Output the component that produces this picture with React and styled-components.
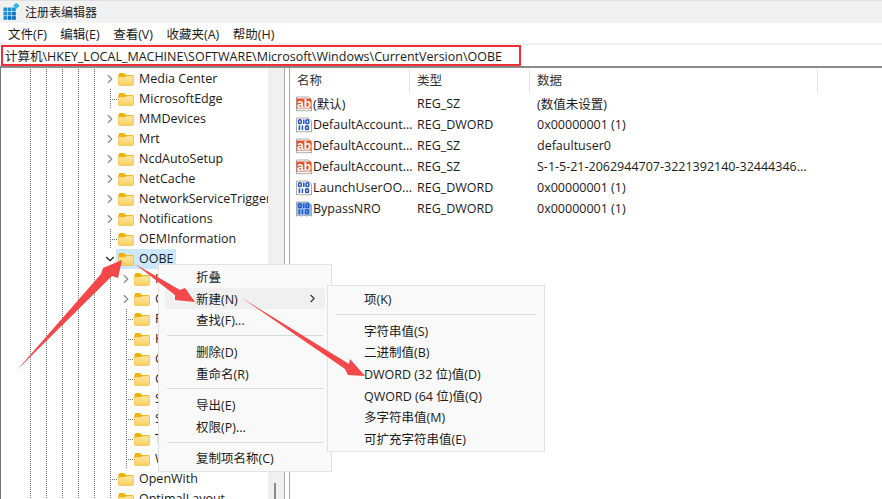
import React from "react";
import styled, { createGlobalStyle } from "styled-components";
import { ChevronRight, ChevronDown } from "lucide-react";

const GlobalStyle = createGlobalStyle`
  html, body {
    margin: 0;
    padding: 0;
    background: #fff;
  }
  body {
    font-family: "Open Sans", "Noto Sans CJK SC", sans-serif;
    font-size: 12.5px;
    color: #1a1a1a;
  }
`;

const treeRows = [
  { name: "Media Center", branch: true },
  { name: "MicrosoftEdge" },
  { name: "MMDevices", branch: true },
  { name: "Mrt", branch: true },
  { name: "NcdAutoSetup", branch: true },
  { name: "NetCache", branch: true },
  { name: "NetworkServiceTriggers", branch: true },
  { name: "Notifications", branch: true },
  { name: "OEMInformation" },
  { name: "OOBE", open: true, selected: true },
  { name: "I", branch: true, child: true },
  { name: "C", branch: true, child: true },
  { name: "F", child: true },
  { name: "H", child: true },
  { name: "C", child: true },
  { name: "C", child: true },
  { name: "S", child: true },
  { name: "S", child: true },
  { name: "T", child: true },
  { name: "W", child: true },
  { name: "OpenWith" },
  { name: "OptimalLayout" },
];

const values = [
  { kind: "sz", name: "(默认)", type: "REG_SZ", data: "(数值未设置)" },
  { kind: "bin", name: "DefaultAccount...", type: "REG_DWORD", data: "0x00000001 (1)" },
  { kind: "sz", name: "DefaultAccount...", type: "REG_SZ", data: "defaultuser0" },
  { kind: "sz", name: "DefaultAccount...", type: "REG_SZ", data: "S-1-5-21-2062944707-3221392140-32444346..." },
  { kind: "bin", name: "LaunchUserOO...", type: "REG_DWORD", data: "0x00000001 (1)" },
  { kind: "bin", name: "BypassNRO", type: "REG_DWORD", data: "0x00000001 (1)", selected: true },
];

const contextItems = [
  { label: "折叠" },
  { label: "新建(N)", active: true },
  { label: "查找(F)..." },
  { sep: true },
  { label: "删除(D)" },
  { label: "重命名(R)" },
  { sep: true },
  { label: "导出(E)" },
  { label: "权限(P)..." },
  { sep: true },
  { label: "复制项名称(C)" },
];

const subItems = [
  { label: "项(K)" },
  { sep: true },
  { label: "字符串值(S)" },
  { label: "二进制值(B)" },
  { label: "DWORD (32 位)值(D)" },
  { label: "QWORD (64 位)值(Q)" },
  { label: "多字符串值(M)" },
  { label: "可扩充字符串值(E)" },
];

const Window = styled.div`
  position: relative;
  width: 882px;
  height: 499px;
  overflow: hidden;
  background: #fff;
  display: flex;
  flex-direction: column;
`;

const TitleBar = styled.div`
  height: 23px;
  box-sizing: border-box;
  flex: none;
  display: flex;
  align-items: center;
  gap: 6px;
  padding-left: 3px;
  background: #f1f1f1;
  border-top: 1px solid #e0e0e0;
  font-size: 12px;
  color: #222;
`;

const MenuBar = styled.div`
  height: 20px;
  flex: none;
  display: flex;
  gap: 13.5px;
  align-items: center;
  padding-left: 8px;
  font-size: 12.5px;
  background: #fff;
`;

const AddressWrap = styled.div`
  height: 23px;
  box-sizing: border-box;
  flex: none;
  display: flex;
  align-items: flex-start;
  border-top: 2px solid #f0f0f0;
  padding-left: 1px;
`;

const AddressBox = styled.div`
  width: 520px;
  height: 21px;
  box-sizing: border-box;
  border: 2px solid #ee2f36;
  display: flex;
  align-items: center;
  padding-left: 2px;
  font-size: 12.5px;
  white-space: nowrap;
  overflow: hidden;
`;

const Panes = styled.div`
  flex: 1;
  min-height: 0;
  display: flex;
  border-top: 2px solid #8a8a8a;
`;

const TreePane = styled.div`
  width: 268px;
  flex: none;
  overflow: hidden;
  padding-top: 1px;
  border-left: 1px solid #777;
  box-sizing: border-box;
`;

const TreeRowEl = styled.div`
  height: 20px;
  display: flex;
  align-items: stretch;
  padding-left: 29px;
  white-space: nowrap;
`;

const Guide = styled.span`
  width: 16px;
  flex: none;
  background-image: linear-gradient(#777 50%, transparent 50%);
  background-size: 1px 2px;
  background-repeat: repeat-y;
  background-position: 0 0;
`;

const Branch = styled.span`
  position: relative;
  width: 8px;
  flex: none;
  ${(p) =>
    p.$leaf
      ? `
    background-image: linear-gradient(#777 50%, transparent 50%), linear-gradient(90deg, #777 50%, transparent 50%);
    background-size: 1px 2px, 2px 1px;
    background-repeat: repeat-y, repeat-x;
    background-position: 0 0, 0 50%;
  `
      : ""}

  svg {
    position: absolute;
    left: -7px;
    top: 3px;
  }
`;

const TreeItem = styled.span`
  display: flex;
  align-items: center;
  height: 20px;
  gap: 5px;
  margin-left: -2px;
  padding: 0 3px 0 2px;
  background: ${(p) => (p.$selected ? "#cce8ff" : "transparent")};
  font-size: 12.5px;
  line-height: 20px;
`;

const Scrollbar = styled.div`
  width: 16px;
  flex: none;
  background: #f0f0f0;
  display: flex;
  flex-direction: column;
  justify-content: flex-end;
  align-items: flex-start;
  padding-left: 6px;
  box-sizing: border-box;
`;

const Thumb = styled.div`
  width: 2px;
  height: 16px;
  background: #8b8b8b;
`;

const Splitter = styled.div`
  width: 4px;
  flex: none;
  border-left: 1px solid #a8a8a8;
  border-right: 1px solid #a8a8a8;
`;

const ListPane = styled.div`
  flex: 1;
  min-width: 0;
  overflow: hidden;
`;

const ListHeader = styled.div`
  height: 25px;
  display: grid;
  grid-template-columns: 120px 120px 288px;
`;

const HeaderCell = styled.div`
  padding: 0 0 2px 7px;
  height: 25px;
  display: flex;
  align-items: center;
  border-right: 1px solid #e5e5e5;
  box-sizing: border-box;
  font-size: 12.5px;
  color: #333;
`;

const ListRow = styled.div`
  height: 21px;
  display: grid;
  grid-template-columns: 120px 120px 1fr;
  align-items: center;
  white-space: nowrap;
  font-size: 12.5px;
`;

const NameCell = styled.div`
  display: flex;
  align-items: center;
  gap: 1px;
  padding-left: 6px;
`;

const TypeCell = styled.div`
  padding-left: 7px;
`;

const PopupMenu = styled.div`
  position: absolute;
  left: ${(p) => p.$left}px;
  top: ${(p) => p.$top}px;
  width: ${(p) => p.$width}px;
  box-sizing: border-box;
  padding: ${(p) => p.$padTop}px 6px 2px;
  background: #f9f9f9;
  border: 1px solid #e2e2e2;
  font-size: 12.5px;
  color: #1a1a1a;
`;

const PopupItem = styled.div`
  position: relative;
  height: 21.6px;
  display: flex;
  align-items: center;
  padding-left: ${(p) => p.$indent}px;
  border-radius: 3px;
  background: ${(p) => (p.$active ? "#f0f0f0" : "transparent")};
  white-space: nowrap;

  svg {
    position: absolute;
    right: 6px;
    top: 4px;
  }
`;

const PopupSep = styled.div`
  height: 1px;
  margin: 4.5px 2px;
  background: #d8d8d8;
`;

const ArrowLayer = styled.svg`
  position: absolute;
  left: 0;
  top: 0;
  pointer-events: none;
`;

const IconLabel = styled.text`
  font-family: "Liberation Sans", sans-serif;
  font-size: 12px;
  font-weight: 700;
  fill: #fff;
`;

function AppIcon() {
  const cells = [];
  for (let r = 0; r < 3; r++) {
    for (let c = 0; c < 3; c++) {
      cells.push(<rect key={`${r}${c}`} x={0.5 + c * 4.3} y={4.5 + r * 4.3} width="3.7" height="3.7" fill={r + c > 2 ? "#0a6fb8" : "#1b8fd6"} />);
    }
  }
  return (
    <svg width="16" height="18" viewBox="0 0 16 18">
      {cells}
      <rect x="11" y="0.5" width="4.5" height="4.5" fill="#35b6ec" transform="rotate(45 13.2 2.8)" />
    </svg>
  );
}

function Folder() {
  return (
    <svg width="16" height="14" viewBox="0 0 16 14" style={{ flex: "none" }}>
      <defs>
        <linearGradient id="fold" x1="0" y1="0" x2="0" y2="1">
          <stop offset="0" stopColor="#ffe9a8" />
          <stop offset="1" stopColor="#fbcf5c" />
        </linearGradient>
      </defs>
      <path d="M0.5 2.5 Q0.5 1 2 1 H6 L8 3 H14.5 Q15.5 3 15.5 4 V6 H0.5Z" fill="#f2b100" />
      <path d="M0.5 5 H7 L8.5 3.8 H14.5 Q15.5 3.8 15.5 5 V12.5 Q15.5 13.5 14.5 13.5 H1.5 Q0.5 13.5 0.5 12.5Z" fill="url(#fold)" stroke="#edb733" strokeWidth="0.6" />
    </svg>
  );
}

function ValueIcon({ kind, selected }) {
  const bg = selected ? "#8cbcf0" : "#fff";
  return (
    <svg width="16" height="16" viewBox="0 0 16 16" style={{ flex: "none" }}>
      <path d="M0.5 1 H12.5 L15.5 4 V15 Q13 13.5 10.5 15 Q8 13.5 5.5 15 Q3 13.5 0.5 15Z" fill={bg} stroke="#a9a9a9" />
      {kind === "sz" ? (
        <>
          <rect x="0.5" y="2.5" width="14.5" height="10" fill="#e2552e" />
          <IconLabel x="1" y="11.5">ab</IconLabel>
        </>
      ) : (
        <g stroke="#1f52c4" strokeWidth="1.5" fill="none">
          <rect x="2.5" y="2.8" width="2.8" height="3.8" rx="1.2" />
          <path d="M7.8 2.4 V7" />
          <rect x="10" y="2.8" width="2.8" height="3.8" rx="1.2" />
          <path d="M3.4 8.4 V13" />
          <path d="M6.4 8.4 V13" />
          <rect x="9.6" y="8.8" width="2.8" height="3.8" rx="1.2" />
        </g>
      )}
    </svg>
  );
}

function TreeRow({ row }) {
  const guides = row.child ? 6 : 5;
  return (
    <TreeRowEl>
      {Array.from({ length: guides }).map((_, i) => (
        <Guide key={i} />
      ))}
      <Branch $leaf={!row.branch && !row.open}>
        {row.branch && <ChevronRight size={14} color="#8a8a8a" strokeWidth={2} />}
        {row.open && <ChevronDown size={14} color="#222" strokeWidth={2} />}
      </Branch>
      <TreeItem $selected={row.selected}>
        <Folder />
        {row.name}
      </TreeItem>
    </TreeRowEl>
  );
}

function Popup({ items, left, top, width, indent, padTop }) {
  return (
    <PopupMenu $left={left} $top={top} $width={width} $padTop={padTop}>
      {items.map((it, i) =>
        it.sep ? (
          <PopupSep key={i} />
        ) : (
          <PopupItem key={i} $indent={indent} $active={it.active}>
            {it.label}
            {it.active && <ChevronRight size={13} color="#333" strokeWidth={2} />}
          </PopupItem>
        )
      )}
    </PopupMenu>
  );
}

export default function App() {
  return (
    <Window>
      <GlobalStyle />
      <TitleBar>
        <AppIcon />
        注册表编辑器
      </TitleBar>
      <MenuBar>
        <span>文件(F)</span>
        <span>编辑(E)</span>
        <span>查看(V)</span>
        <span>收藏夹(A)</span>
        <span>帮助(H)</span>
      </MenuBar>
      <AddressWrap>
        <AddressBox>计算机\HKEY_LOCAL_MACHINE\SOFTWARE\Microsoft\Windows\CurrentVersion\OOBE</AddressBox>
      </AddressWrap>
      <Panes>
        <TreePane>
          {treeRows.map((row, i) => (
            <TreeRow key={i} row={row} />
          ))}
        </TreePane>
        <Scrollbar>
          <Thumb />
        </Scrollbar>
        <Splitter />
        <ListPane>
          <ListHeader>
            <HeaderCell>名称</HeaderCell>
            <HeaderCell>类型</HeaderCell>
            <HeaderCell>数据</HeaderCell>
          </ListHeader>
          {values.map((v, i) => (
            <ListRow key={i}>
              <NameCell>
                <ValueIcon kind={v.kind} selected={v.selected} />
                {v.name}
              </NameCell>
              <TypeCell>{v.type}</TypeCell>
              <TypeCell>{v.data}</TypeCell>
            </ListRow>
          ))}
        </ListPane>
      </Panes>
      <Popup items={contextItems} left={158} top={264} width={174} indent={31} padTop={1} />
      <Popup items={subItems} left={327} top={285} width={218} indent={30} padTop={2} />
      <ArrowLayer width="882" height="499" viewBox="0 0 882 499">
        <polygon points="17,370 101,274 103,268 122,260 118,278 112,276" fill="#f4474a" />
        <polygon points="135,264 180,290 185,288 195,302 175,300 175,295" fill="#f4474a" />
        <polygon points="242,298 349,364 350,359 365,376 348,375 345,369" fill="#f4474a" />
      </ArrowLayer>
    </Window>
  );
}
